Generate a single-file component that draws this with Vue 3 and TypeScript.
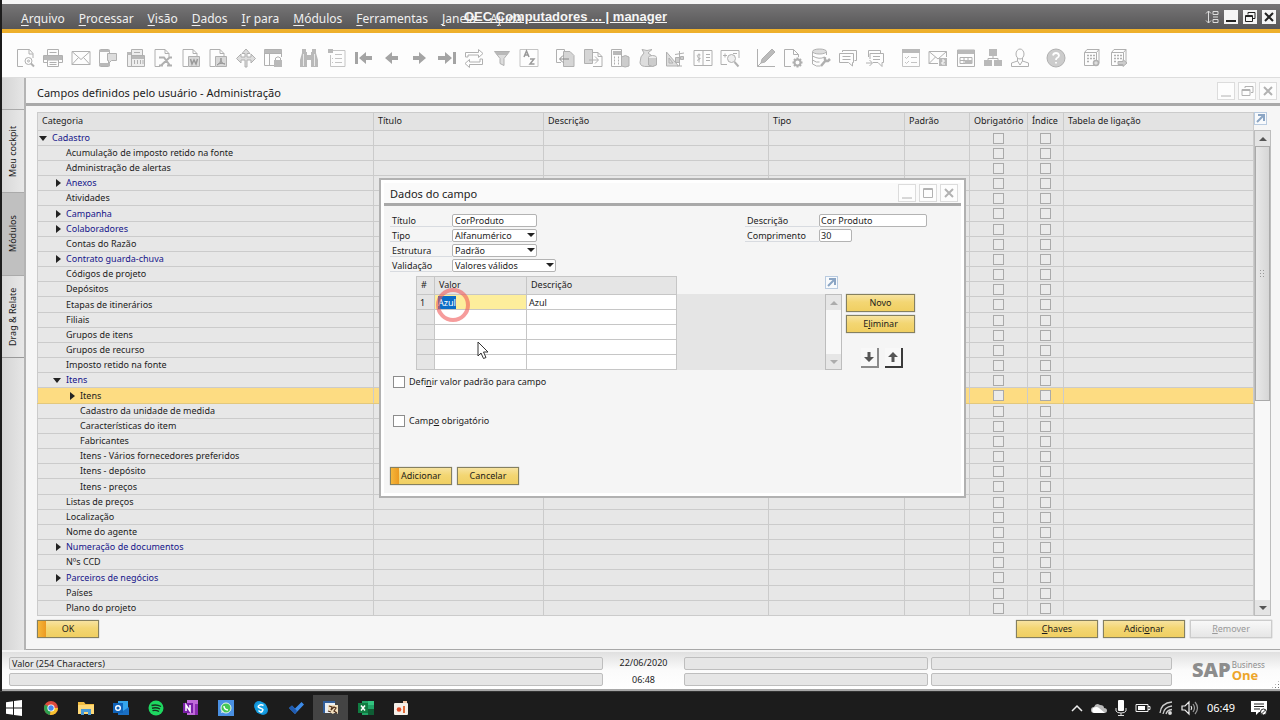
<script setup lang="ts">
import { onMounted, ref } from 'vue'

interface Row {
  label: string
  level: number
  state?: 'open' | 'closed'
  selected?: boolean
}

interface Icon {
  name: string
  art: string
}

const menus: [string, string][] = [
  ['A', 'rquivo'], ['P', 'rocessar'], ['V', 'isão'], ['D', 'ados'], ['I', 'r para'],
  ['M', 'ódulos'], ['F', 'erramentas'], ['J', 'anela'],
]

const G = 'fill="#b9b9b9" stroke="none"'
const sheet = '<path d="M2 18.5V1.500h10l4 4V9M12 1.500v4h4M2 18.500h5"/>'

const toolGroups: Icon[][] = [
  [
    { name: 'Visualizar', art: '<path d="M7 18.5H1.5v-17h12l3.500 4V10M13 1.500v4.500h4"/><circle cx="12.500" cy="13" r="3.500"/><circle cx="12.500" cy="13" r="1"/><path d="M15 15.500l3 3" stroke-width="2"/>' },
    { name: 'Imprimir', art: '<path d="M4.500 7V1.500h11V7M4.500 14.500h-4v-7h19v7h-4M4.500 12v6.500h11V12z"/><path d="M1 8h18v4H1z" ' + G + '/><path d="M6.500 4.500h7M6.500 14.500h7M6.500 16.500h7"/>' },
    { name: 'E-mail', art: '<path d="M1 3.500h18v13H1zM1 3.500l9 8 9-8M1 16.500l6.500-7M19 16.500l-6.500-7"/>' },
    { name: 'SMS', art: '<rect x="1.500" y="1.500" width="10" height="17" rx="1"/><path d="M1 2h11v2H1zM1 15h11v3H1z" ' + G + '/><path d="M9.500 5.500h9v7h-5l-3 3v-3h-1z" fill="#ddd"/>' },
    { name: 'Fax', art: '<path d="M5.500 7V1.500h11V7M1.500 4.500h4v14h-4zM5.500 7.500h13v11h-13z" fill="#eee"/><path d="M1 4h4v3H1zM6 8h12v3H6z" ' + G + '/><path d="M8.500 12v4M11.500 12v4M14.500 12v4M17 12v4M8 4.500h6"/>' },
    { name: 'Excel', art: sheet + '<path d="M6 9.500h5l6 8M8 17.500L16.500 9.500H19M6 17.500h4M14 17.500h5" stroke-width="2"/>' },
    { name: 'Word', art: sheet + '<path d="M7.500 8.500h11v10h-11z" fill="#d8d8d8"/><path d="M9.500 11l1.500 5 2-4 2 4 1.500-5" stroke="#999" stroke-width="1.500"/>' },
    { name: 'PDF', art: sheet + '<path d="M7.500 8.500h11v10h-11z" fill="#d8d8d8"/><path d="M13 10c0 4-2 6-4 7 2-2 6-2 8-1-3 0-4-3-4-6z" fill="#aaa" stroke="#999"/>' },
    { name: 'Iniciar aplicativo', art: '<path d="M10 1l4 4.500h-3V9h4V6l4.500 4.500L15 15v-3h-4v7H9v-7H5v3L.5 10.500 5 6v3h4V5.500H6z" fill="#ddd"/>' },
    { name: 'Bloquear tela', art: '<path d="M11 17.500H1.500v-16h17V9M1.500 5.500h17M6.500 5.500v12"/><path d="M1.500 2h17v3h-17zM11 12h8v7h-8z" ' + G + '/><path d="M12.500 12v-2q2.500-2.500 5 0v2"/>' },
  ],
  [
    { name: 'Procurar', art: '<path d="M3 1h4v3h1v3h4V4h1V1h4v4l2 7v7h-7v-7H8v7H1v-7l2-7z" ' + G + '/><path d="M4.500 6v12M15.500 6v12" stroke="#e8e8e8"/>' },
    { name: 'Adicionar registro', art: '<path d="M5 2.500h13v16H3.500V7M8 6.500h7M8 10.500h7M8 14.500h7M5 10.500h1M5 14.500h1" stroke="#c4c4c4"/><path d="M1 1h5v4H1z" ' + G + '/>' },
    { name: 'Primeiro registro', art: '<path d="M1 4h3v12H1zM18 8v4h-6v4l-7-6 7-6v4z" fill="#a4a4a4" stroke="none"/>' },
    { name: 'Registro anterior', art: '<path d="M16 8v4h-6v4L3 10l7-6v4z" fill="#a4a4a4" stroke="none"/>' },
    { name: 'Próximo registro', art: '<path d="M4 8v4h6v4l7-6-7-6v4z" fill="#a4a4a4" stroke="none"/>' },
    { name: 'Último registro', art: '<path d="M1 8v4h7v4l7-6-7-6v4zM16 4h3v12h-3z" fill="#a4a4a4" stroke="none"/>' },
    { name: 'Atualizar', art: '<path d="M1.500 9V4.500h13V1.500L19 5.500l-4.500 4V7H4v2zM18.500 11v5.500h-13v3L1 15.500l4.500-4V14H16v-3z" fill="#fff"/>' },
    { name: 'Filtro', art: '<path d="M2.500 3.500h15l-5.500 7v7l-4-2v-5z" fill="#ddd"/><path d="M3 4h14l-2 3H5z" ' + G + '/>' },
    { name: 'Classificar', art: '<path d="M1 1.500h18v17H1z" stroke="#c4c4c4"/><path d="M5 9l2.500-6L10 9M6 7h3M11 11h4l-4 5h4.500" stroke-width="1.500" stroke="#999"/>' },
  ],
  [
    { name: 'Documento base', art: '<path d="M6 14.500H1.500v-13h8v3"/><path d="M8.500 3.500h6.500l4 4v11H8.500z" fill="#d5d5d5"/><path d="M14 11H5m3-3.500L4.500 11 8 14.500" stroke="#888"/>' },
    { name: 'Documento de destino', art: '<path d="M1.500 1.500h8v14h-8z" fill="#d5d5d5"/><path d="M10 4.500h5l4 4v10h-9M15 4.500v4h4M6 12h9m-3-3.500l3.500 3.500-3.500 3.500"/>' },
    { name: 'Lucro bruto', art: '<path d="M1.500 1.500h10v17h-10z"/><path d="M4 9.500h1M8 9.500h1M4 12.500h1M8 12.500h1M4 15.500h1M8 15.500h1" stroke-width="2"/><path d="M3 3h8v4H3z" ' + G + '/><path d="M11.500 9q4-3 7.500 0v9q-4 2-7.500 0z" fill="#ccc"/>' },
    { name: 'Meios de pagamento', art: '<path d="M6 5L4 1.500q5 2 10 0L10 5q8 5 8 10 0 4-8 3.500-8 .5-8-4Q2 8 6 5z" fill="#ddd"/><ellipse cx="14.500" cy="9.500" rx="4" ry="2" fill="#eee"/><path d="M10.500 10v7q4 3 8 0v-7" fill="#ccc"/>' },
    { name: 'Volume e peso', art: '<path d="M1.500 4v14h12zM4 10v5h4z" fill="#ddd"/><path d="M10 6.500l9-1.500M10.500 9.500h4v5h-4zM15.500 8.500h3v3h-3z" fill="#ccc"/><path d="M14.500 3v15M12 18h5"/>' },
    { name: 'Diário de transações', art: '<path d="M1 2.500h18v15H1zM10 2.500v15M13 6.500h4M13 9.500h4M13 12.500h4"/><path d="M7.500 7q-4-1-3 1.500t2.500 2-3 2M6 5.500v9"/>' },
    { name: 'Visualizar diário', art: '<path d="M7 16.500H1v-14h18V10M3 7.500h4M5 5.500v4M13 5.500h4"/><circle cx="11.500" cy="10.500" r="4" fill="#eee"/><path d="M14.500 14l4 4.500" stroke-width="2"/>' },
  ],
  [
    { name: 'Designer de layout', art: '<path d="M1.500 1v17.500H19M1.500 18.500L7 13" /><path d="M6 11L16 1l3 3L9 14l-4 1z" fill="#bbb"/>' },
    { name: 'Configurações de formulário', art: '<path d="M8 18.500H1.500v-17h9l5 5V9M10.500 1.500v5h5"/><circle cx="14.500" cy="14.500" r="3" stroke-width="2"/><path d="M14.500 9.500v2M14.500 17.500v2M9.500 14.500h2M17.500 14.500h2M11 11l1.500 1.500M16.500 16.500L18 18M18 11l-1.500 1.500M12.500 16.500L11 18" stroke-width="2"/>' },
    { name: 'Gerenciador de consultas', art: '<ellipse cx="8.500" cy="3.500" rx="7" ry="2.500" fill="#ddd"/><path d="M1.500 4v12q4 3 8 2M15.500 4v3M1.500 8q7 4 12 1M1.500 12q4 3 7 2"/><path d="M10 18l5-6m-1-3q-1 4 3 4l2-2" stroke-width="2.500"/>' },
    { name: 'Mensagens', art: '<path d="M4.500 4V2.500h14v10h-2M1.500 5.500h14v9h-1v3.500l-4-3.500h-9zM4.500 8.500h8M4.500 11.500h8"/>' },
    { name: 'Nova mensagem', art: '<path d="M3.500 9V2.500h12v3M5 11V5.500h13.500v9H17v4l-4-4H8M8 8.500h7M8 11.500h7M1 15h6m-2.500-3L7.500 15l-3 3"/>' },
  ],
  [
    { name: 'Atividades', art: '<path d="M1.500 2.500h17v16h-17zM10 9.500h6M10 14.500h6M4 9l1.500 1.500L8 8M4 14l1.500 1.500L8 13" stroke="#c4c4c4"/><path d="M1 1h18v4H1z" ' + G + '/>' },
    { name: 'Alertas', art: '<path d="M10 15.500H1v-12h17.500V9M1 3.500l9 7.500 8.500-7.500M1 15.500L7.500 9"/><path d="M11 10h8v8h-8z" ' + G + '/><path d="M14 12h2v2h-2v2h3" stroke="#fff"/>' },
    { name: 'Calendário', art: '<path d="M1.500 2h17v16.500h-17zM4 9.500h12v6H4zM8 9.500v6M12 9.500v6M4 12.500h12"/><path d="M1.500 2h17v4h-17zM9 12h7v4H9z" ' + G + '/>' },
    { name: 'Organização', art: '<path d="M6 1h8v7H6zM1 12h8v6H1zM11 12h8v6h-8z" ' + G + '/><path d="M10 8v2.500M5 12v-1.500h10V12"/>' },
    { name: 'Funcionário', art: '<ellipse cx="10" cy="6" rx="4" ry="5"/><path d="M7.500 10v3L1.500 15v3.500h17V15l-6-2v-3M7.500 13l2.500 4 2.500-4"/>' },
  ],
  [
    { name: 'Ajuda', art: '<circle cx="10" cy="10" r="9" fill="#ccc" stroke="#b0b0b0"/><path d="M7 7.500q.5-2.500 3-2.500t3 2.500q0 1.500-2 2.500-1 .5-1 2M10 14v1.500" stroke="#fff" stroke-width="1.800"/>' },
  ],
  [
    { name: 'Configurar painel', art: '<path d="M5 1.500h12v14M2.500 4.500L5 1.500M2.500 4.500h12v13h-12zM14.500 4.500l2.500-3"/><path d="M5 7.500h2m1 0h2m1 0h2M5 10.500h2m1 0h2m1 0h2M5 13.500h2" stroke-width="1.500"/><circle cx="14" cy="15" r="2.500" fill="#ddd" stroke-width="1.500"/>' },
    { name: 'Abrir painel', art: '<path d="M5 1.500h12v14M2.500 4.500L5 1.500M2.500 4.500h12v13h-12zM14.500 4.500l2.500-3"/><path d="M5 7.500h2m1 0h2m1 0h2M5 10.500h2m1 0h2m1 0h2M5 13.500h2" stroke-width="1.500"/><path d="M9 13.500h5v-2l4 3.500-4 3.500v-2H9z" fill="#ccc"/>' },
  ],
]

const sideTabs = [
  { label: 'Meu cockpit', active: false },
  { label: 'Módulos', active: true },
  { label: 'Drag & Relate', active: false },
]

const rows: Row[] = [
  { label: 'Cadastro', level: 0, state: 'open' },
  { label: 'Acumulação de imposto retido na fonte', level: 1 },
  { label: 'Administração de alertas', level: 1 },
  { label: 'Anexos', level: 1, state: 'closed' },
  { label: 'Atividades', level: 1 },
  { label: 'Campanha', level: 1, state: 'closed' },
  { label: 'Colaboradores', level: 1, state: 'closed' },
  { label: 'Contas do Razão', level: 1 },
  { label: 'Contrato guarda-chuva', level: 1, state: 'closed' },
  { label: 'Códigos de projeto', level: 1 },
  { label: 'Depósitos', level: 1 },
  { label: 'Etapas de itinerários', level: 1 },
  { label: 'Filiais', level: 1 },
  { label: 'Grupos de itens', level: 1 },
  { label: 'Grupos de recurso', level: 1 },
  { label: 'Imposto retido na fonte', level: 1 },
  { label: 'Itens', level: 1, state: 'open' },
  { label: 'Itens', level: 2, state: 'closed', selected: true },
  { label: 'Cadastro da unidade de medida', level: 2 },
  { label: 'Características do item', level: 2 },
  { label: 'Fabricantes', level: 2 },
  { label: 'Itens - Vários fornecedores preferidos', level: 2 },
  { label: 'Itens - depósito', level: 2 },
  { label: 'Itens - preços', level: 2 },
  { label: 'Listas de preços', level: 1 },
  { label: 'Localização', level: 1 },
  { label: 'Nome do agente', level: 1 },
  { label: 'Numeração de documentos', level: 1, state: 'closed' },
  { label: 'Nºs CCD', level: 1 },
  { label: 'Parceiros de negócios', level: 1, state: 'closed' },
  { label: 'Países', level: 1 },
  { label: 'Plano do projeto', level: 1 },
]

const apps: Icon[] = [
  { name: 'Chrome', art: '<circle cx="8" cy="8" r="7" fill="#dd4b3e"/><path d="M8 8L2 4.500A7 7 0 0 0 7 15z" fill="#2da14f"/><path d="M8 8h7a7 7 0 0 1-8 7z" fill="#f6c22f"/><circle cx="8" cy="8" r="3.600" fill="#fff"/><circle cx="8" cy="8" r="2.700" fill="#4587ed"/>' },
  { name: 'Explorador de arquivos', art: '<path d="M0 2h6l1.500 2H16v10H0z" fill="#f2bd42"/><path d="M0 5h16v9H0z" fill="#ffd977"/><path d="M3 9h10v6h-3v-3H6v3H3z" fill="#4a9bd8"/>' },
  { name: 'Outlook', art: '<path d="M5 1h10v13H5z" fill="#35a5ea"/><path d="M5 8l5 3 6-4v8H5z" fill="#1a6fc4"/><rect y="3" width="10" height="10" fill="#0f62b8"/><circle cx="5" cy="8" r="2.300" fill="none" stroke="#fff" stroke-width="1.400"/>' },
  { name: 'Spotify', art: '<circle cx="8" cy="8" r="7.500" fill="#1ed760"/><path d="M3.500 5.500q5-1.500 9.500 1M4 8.200q4.500-1.200 8 .8M4.500 10.700q3.500-1 6.500.8" fill="none" stroke="#16301f" stroke-width="1.400"/>' },
  { name: 'OneNote', art: '<path d="M4 0h11v15H4z" fill="#c06ad8"/><path d="M12 4h3v11h-3z" fill="#8a2bb0"/><rect y="3" width="10" height="10" fill="#7a1ea8"/><path d="M3 11V5l4 6V5" fill="none" stroke="#fff" stroke-width="1.500"/>' },
  { name: 'WhatsApp', art: '<path d="M0 0h16v16H0z" fill="#4a90e2"/><circle cx="8" cy="8" r="5" fill="#45c655" stroke="#e6f4e8"/><path d="M6 6q0 3.500 4 4" fill="none" stroke="#fff" stroke-width="1.500"/><path d="M3 13l1-3 2 2z" fill="#e6f4e8"/>' },
  { name: 'Skype', art: '<circle cx="6" cy="6" r="5" fill="#1291d8"/><circle cx="10" cy="10" r="5" fill="#1291d8"/><circle cx="8" cy="8" r="6" fill="#15a0e2"/><path d="M10.500 5.500Q8 4 6 5.500t1 2.500 3 1.500-1 2T5.500 10.500" fill="none" stroke="#fff" stroke-width="1.500"/>' },
  { name: 'To Do', art: '<path d="M1 8l3-2.500 3 3L13.500 2 16 4.500 7 14z" fill="#3d8be8"/><path d="M1 8l3-2.500 5 5.500-2 3z" fill="#205bb0"/>' },
  { name: 'SAP Business One', art: '<path d="M0 1h12v12H0z" fill="#e8eef4"/><path d="M0 1h12v2H2v10H0z" fill="#315f9c"/><path d="M5 5h10v9l-3-2-2 2-5-3z" fill="#f2dfbd"/><path d="M6 6l3 1-1 3 3-3 2 1-2 3 3 2M5 11l3 1" fill="none" stroke="#51321d" stroke-width="1.200"/>' },
  { name: 'Excel', art: '<path d="M4 1h12v14H4z" fill="#21a366"/><path d="M10 1h6v4h-6z" fill="#33c481"/><path d="M10 9h6v6h-6z" fill="#0f5e35"/><rect y="3" width="10" height="10" fill="#107c41"/><path d="M3 5.500l4 5M7 5.500l-4 5" stroke="#fff" stroke-width="1.500"/>' },
  { name: 'Gravador', art: '<rect x="1" y="3" width="14" height="12" rx="1" fill="#f4efe8"/><circle cx="6" cy="9.500" r="2.300" fill="#df4c2a"/><path d="M10 6h2v7h-2z" fill="#e36b37"/><path d="M10 1h4v2h-4z" fill="#f1c8a8"/>' },
]

const fieldTitle = ref('CorProduto')
const fieldDescription = ref('Cor Produto')
const fieldLength = ref('30')
const fieldValue = ref('Azul')
const valueInput = ref<HTMLInputElement | null>(null)

onMounted(() => {
  valueInput.value?.focus()
  valueInput.value?.select()
})
</script>

<template>
  <div class="desktop">
    <div class="app">
      <header class="menubar">
        <nav class="menus" aria-label="Menu principal">
          <a v-for="m in menus" :key="m[1]" href="#"><u>{{ m[0] }}</u>{{ m[1] }}</a>
          <a href="#">A<u>j</u>uda</a>
        </nav>
        <a class="company" href="#">OEC Computadores ... | manager</a>
        <div class="app-controls">
          <svg class="resize" width="14" height="14" viewBox="0 0 14 14" fill="none" stroke="#ddd"><path d="M3.500 1v12M1 3.500L3.500 1 6 3.500M1 10.500L3.500 13 6 10.500M8 1.500h5v3H8zM8 9.500h5v3H8zM8 7h5" /></svg>
          <button aria-label="Minimizar"><svg width="14" height="14" viewBox="0 0 14 14"><path d="M2 11h10" stroke="#222" stroke-width="2" /></svg></button>
          <button aria-label="Restaurar"><svg width="14" height="14" viewBox="0 0 14 14" fill="none" stroke="#222"><path d="M5 4.500V2.500h7v6h-2M2.500 5.500h7v6h-7zM2.500 6.500h7" /></svg></button>
          <button aria-label="Fechar"><svg width="14" height="14" viewBox="0 0 14 14"><path d="M3 3l8 8M11 3l-8 8" stroke="#222" stroke-width="2" /></svg></button>
        </div>
      </header>

      <div class="toolbar">
        <div v-for="(g, i) in toolGroups" :key="i" class="tool-group" :class="'tools-' + g.length">
          <button v-for="t in g" :key="t.name" :aria-label="t.name">
            <svg width="20" height="20" viewBox="0 0 20 20" fill="none" stroke="#b0b0b0" v-html="t.art" />
          </button>
        </div>
      </div>

      <div class="workspace">
        <aside class="rail">
          <button v-for="t in sideTabs" :key="t.label" :class="{ active: t.active }">{{ t.label }}</button>
        </aside>

        <main class="window">
          <div class="titlebar">
            <h1>Campos definidos pelo usuário - Administração</h1>
            <div class="win-controls">
              <button aria-label="Minimizar janela"><svg width="16" height="16" viewBox="0 0 16 16"><path d="M3 13h10" /></svg></button>
              <button aria-label="Restaurar janela"><svg width="16" height="16" viewBox="0 0 16 16"><path d="M6 5V3.500h8v6h-2M3 6.500h8v6H3zM3 7.500h8" /></svg></button>
              <button aria-label="Fechar janela"><svg width="16" height="16" viewBox="0 0 16 16"><path d="M4 4l8 8M12 4l-8 8" stroke-width="2" /></svg></button>
            </div>
          </div>

          <div class="list">
            <div class="tree-wrap">
              <table class="tree">
                <colgroup>
                  <col class="c-cat"><col class="c-title"><col class="c-desc"><col class="c-type"><col class="c-def"><col class="c-req"><col class="c-idx"><col>
                </colgroup>
                <thead>
                  <tr>
                    <th>Categoria</th><th>Título</th><th>Descrição</th><th>Tipo</th><th>Padrão</th><th>Obrigatório</th><th>Índice</th><th>Tabela de ligação</th>
                  </tr>
                </thead>
                <tbody>
                  <tr v-for="(r, i) in rows" :key="i" :class="{ selected: r.selected }">
                    <td :class="['level-' + r.level, { group: r.state && !r.selected }]">
                      <span class="twist" :class="r.state" />{{ r.label }}
                    </td>
                    <td /><td /><td /><td />
                    <td class="check"><input type="checkbox" :aria-label="'Obrigatório: ' + r.label" disabled></td>
                    <td class="check"><input type="checkbox" :aria-label="'Índice: ' + r.label" disabled></td>
                    <td />
                  </tr>
                </tbody>
              </table>
            </div>
            <div class="list-side">
              <button class="expand" aria-label="Expandir tabela"><svg width="13" height="13" viewBox="0 0 13 13"><path d="M3 10l6-6M4 3h6v6" /></svg></button>
              <div class="scroll">
                <button aria-label="Rolar para cima"><span class="tri up" /></button>
                <div class="thumb"><span class="grip" /></div>
                <div class="track" />
                <button aria-label="Rolar para baixo"><span class="tri down" /></button>
              </div>
            </div>
          </div>

          <div class="actions">
            <button class="btn default ok">OK</button>
            <button class="btn wide"><u>C</u>haves</button>
            <button class="btn wide">Adici<u>o</u>nar</button>
            <button class="btn wide" disabled><u>R</u>emover</button>
          </div>
        </main>
      </div>

      <footer class="status">
        <div class="fields message"><span>Valor (254 Characters)</span><span /></div>
        <div class="clock"><span>22/06/2020</span><span>06:48</span></div>
        <div class="fields mid"><span /><span /></div>
        <div class="fields end"><span /><span /></div>
        <div class="logo">
          <strong>SAP</strong>
          <div class="product"><span>Business</span><b>One</b></div>
        </div>
        <span class="corner" />
      </footer>
    </div>

    <section class="dialog" role="dialog" aria-labelledby="dialog-title">
      <div class="dialog-title">
        <h2 id="dialog-title">Dados do campo</h2>
        <div class="win-controls">
          <button aria-label="Minimizar diálogo"><svg width="16" height="16" viewBox="0 0 16 16"><path d="M3 13h10" /></svg></button>
          <button aria-label="Maximizar diálogo"><svg width="16" height="16" viewBox="0 0 16 16"><path d="M3.500 3.500h9v9h-9zM3.500 4.500h9" /></svg></button>
          <button aria-label="Fechar diálogo"><svg width="16" height="16" viewBox="0 0 16 16"><path d="M4 4l8 8M12 4l-8 8" stroke-width="2" /></svg></button>
        </div>
      </div>
      <div class="dialog-body">
        <div class="form">
          <div class="form-left">
            <label for="f-title">Título</label>
            <input id="f-title" v-model="fieldTitle" class="field">
            <label for="f-type">Tipo</label>
            <span class="combo"><select id="f-type" class="field"><option>Alfanumérico</option></select><i /></span>
            <label for="f-struct">Estrutura</label>
            <span class="combo"><select id="f-struct" class="field"><option>Padrão</option></select><i /></span>
            <label for="f-valid">Validação</label>
            <span class="combo long"><select id="f-valid" class="field"><option>Valores válidos</option></select><i /></span>
          </div>
          <div class="form-right">
            <label for="f-desc">Descrição</label>
            <input id="f-desc" v-model="fieldDescription" class="field">
            <label for="f-len">Comprimento</label>
            <input id="f-len" v-model="fieldLength" class="field short">
          </div>
        </div>

        <div class="values">
          <div class="values-grid">
            <table>
              <colgroup><col class="v-num"><col class="v-val"><col></colgroup>
              <thead><tr><th>#</th><th>Valor</th><th>Descrição</th></tr></thead>
              <tbody>
                <tr>
                  <td>1</td>
                  <td class="editing"><input ref="valueInput" v-model="fieldValue" aria-label="Valor" size="4"></td>
                  <td>Azul</td>
                </tr>
                <tr v-for="n in 4" :key="n"><td /><td /><td /></tr>
              </tbody>
            </table>
            <div class="filler" />
            <div class="values-side">
              <button class="expand" aria-label="Expandir valores"><svg width="13" height="13" viewBox="0 0 13 13"><path d="M3 10l6-6M4 3h6v6" /></svg></button>
              <div class="scroll idle">
                <button aria-label="Valores acima"><span class="tri up" /></button>
                <div class="track" />
                <button aria-label="Valores abaixo"><span class="tri down" /></button>
              </div>
            </div>
          </div>
          <div class="values-actions">
            <button class="btn">Novo</button>
            <button class="btn">E<u>l</u>iminar</button>
            <div class="movers">
              <button aria-label="Mover para baixo"><svg width="14" height="14" viewBox="0 0 14 14"><path d="M5.500 2h3v5H12l-5 5-5-5h3.500z" /></svg></button>
              <button class="dark" aria-label="Mover para cima"><svg width="14" height="14" viewBox="0 0 14 14"><path d="M5.500 12h3V7H12L7 2 2 7h3.500z" /></svg></button>
            </div>
          </div>
        </div>

        <label class="tick"><input type="checkbox"><span>Defi<u>n</u>ir valor padrão para campo</span></label>
        <label class="tick second"><input type="checkbox"><span>Camp<u>o</u> obrigatório</span></label>

        <div class="dialog-actions">
          <button class="btn default">Adicionar</button>
          <button class="btn">Cancelar</button>
        </div>
      </div>
      <span class="click-ring" />
      <svg class="pointer" width="12" height="19" viewBox="0 0 12 19"><path d="M1 1v14l3-3 2.500 5.500 2.500-1L6.500 11H11z" fill="#fff" stroke="#333" /></svg>
    </section>

    <div class="taskbar">
      <button class="start" aria-label="Iniciar"><svg width="16" height="16" viewBox="0 0 16 16" fill="#fff"><path d="M0 2.300l7-1v6.200H0zM8 1.100L16 0v7.500H8zM0 8.500h7v6.200l-7-1zM8 8.500h8V16l-8-1.100z" /></svg></button>
      <button v-for="a in apps" :key="a.name" class="task" :class="{ current: a.name === 'SAP Business One' }" :aria-label="a.name">
        <svg width="16" height="16" viewBox="0 0 16 16" v-html="a.art" />
      </button>
      <div class="tray">
        <svg width="12" height="16" viewBox="0 0 12 16" fill="none" stroke="#eee" stroke-width="1.500"><path d="M1 11l5-5 5 5" /></svg>
        <svg width="16" height="16" viewBox="0 0 16 16"><path d="M3 13a3 3 0 0 1 0-6Q5 2 9 5q4 0 4 3 3 0 3 2.500T13 13z" fill="#bbb" /><path d="M2 8q4-2 6 0l6 5H3q-3-1-1-5z" fill="#fff" /></svg>
        <svg width="12" height="16" viewBox="0 0 12 16"><rect x="3" width="6" height="11" rx="1" fill="#fff" /><path d="M1 8v3q1 2 5 2t5-2V8M6 13v2M3 15.500h6" fill="none" stroke="#ddd" /></svg>
        <svg width="16" height="16" viewBox="0 0 16 16"><path d="M1 4.500h12v7H1zM13 6.500h2v3h-2" fill="none" stroke="#eee" /><path d="M3 6h7v4H3z" fill="#fff" /></svg>
        <svg width="14" height="16" viewBox="0 0 14 16" fill="none" stroke="#ccc" stroke-width="1.300"><path d="M1 13Q2 3 13 2M4 14q1-7 9-8M7 14q1-4 6-4.500" /><circle cx="11" cy="13" r="1.300" fill="#fff" /></svg>
        <svg width="18" height="16" viewBox="0 0 18 16" fill="none" stroke="#eee" stroke-width="1.200"><path d="M1 6h3l4-4v12l-4-4H1zM10 6q1.500 2 0 4" /><path d="M12 4q3 4 0 8M14 2q5 6 0 12" stroke="#999" /></svg>
        <span class="time">06:49</span>
        <svg class="notes" width="16" height="16" viewBox="0 0 16 16"><path d="M0 1h16v11H8l-3 3v-3H0z" fill="#fff" /><path d="M3 4h10M3 6.500h10M3 9h6" stroke="#222" /><circle cx="12.500" cy="12" r="3" fill="#fff" stroke="#222" /><path d="M10.500 14l4-4" stroke="#222" /></svg>
      </div>
    </div>
  </div>
</template>

<style>
body { background: #1c1c1c; }
</style>

<style scoped>
.desktop {
  --ui: "Noto Sans", "Open Sans", sans-serif;
  --gold: linear-gradient(#f7e3a0, #f3d673 45%, #f0cf62);
  position: relative;
  display: flex;
  flex-direction: column;
  min-height: 100vh;
  font: 9px/14px var(--ui);
  color: #1c1c1c;
  background: #1c1c1c;
}
* { box-sizing: border-box; }
button, input, select { margin: 0; padding: 0; border: 0; font: inherit; color: inherit; background: none; border-radius: 0; outline: 0; }
a { color: inherit; text-decoration: none; }
h1, h2 { margin: 0; font-weight: 400; }
svg { display: block; flex: none; }

.app { flex: 1; display: flex; flex-direction: column; margin-left: 2px; padding-top: 4px; background: #f6f6f6; }

.menubar { position: relative; display: flex; align-items: center; height: 29px; padding: 1px 4px 0 19px; background: linear-gradient(#767576, #575657); border-bottom: 4px solid #eeb02c; color: #f0f0f0; }
.menus { display: flex; gap: 14px; padding-top: 4px; font: 12px/20px var(--ui); white-space: nowrap; }
.menus u { text-underline-offset: 2px; }
.company { position: absolute; left: 462px; top: 4px; font: bold 13px/18px "Liberation Sans", sans-serif; text-decoration: underline; color: #f6f6f6; white-space: nowrap; }
.app-controls { display: flex; align-items: center; gap: 5px; margin-left: auto; }
.app-controls button { width: 14px; height: 14px; background: #f5f5f5; }

.toolbar { display: flex; align-items: center; gap: 16px; height: 45px; padding: 5px 14px 0; background: #fdfdfd; border-bottom: 1px solid #ddd; }
.tool-group { display: flex; justify-content: space-between; }
.tool-group button { width: 20px; height: 20px; }
.tools-10 { width: 267px; }
.tools-9 { width: 240px; }
.tools-7 { width: 185px; }
.tools-5 { width: 129px; }
.tools-2 { width: 47px; }

.workspace { flex: 1; display: flex; }
.rail { width: 24px; padding-top: 31px; background: linear-gradient(90deg, #d4d4d4, #e6e6e6); border-right: 2px solid #b4b4b4; }
.rail button { display: block; width: 22px; height: 83px; writing-mode: vertical-rl; transform: rotate(180deg); text-align: center; border-bottom: 1px solid #aaa; background: linear-gradient(90deg, #e8e8e8, #d8d8d8); }
.rail button:last-child { border-top: 1px solid #999; }
.rail button.active { background: #c0c0c0; }

.window { flex: 1; min-width: 0; display: flex; flex-direction: column; background: #f6f6f6; border-bottom: 1px solid #a8a8a8; }
.titlebar { display: flex; align-items: center; height: 28px; padding: 0 3px 0 11px; border-bottom: 3px solid #a9a9a9; }
h1, h2 { font: 11px/18px var(--ui); color: #1c1c1c; }
.titlebar h1 { padding-top: 4px; }
.win-controls { display: flex; gap: 3px; margin-left: auto; }
.win-controls button { width: 18px; height: 18px; border: 1px solid #dcdcdc; background: #fdfdfd; }
.win-controls svg { fill: none; stroke: #b2b2b2; }

.list { display: flex; align-items: flex-start; margin: 6px 9px 0 11px; }
.tree-wrap { flex: 1; min-width: 0; }
.tree { width: 100%; table-layout: fixed; border-collapse: collapse; background: #e7e7e7; }
.c-cat { width: 336px; }
.c-title { width: 170px; }
.c-desc { width: 225px; }
.c-type { width: 136px; }
.c-def { width: 65px; }
.c-req { width: 58px; }
.c-idx { width: 36px; }
.tree th, .tree td { padding: 0; border: 1px solid #cbcbcb; white-space: nowrap; line-height: 14px; }
.tree th { height: 18px; padding: 0 0 2px 4px; font-weight: 400; text-align: left; background: #e3e3e3; }
.tree td { height: 15px; }
.tree tr:nth-child(6n) td { height: 16px; }
.tree .selected td { background: #fddc82; border-top-color: #e3c87c; border-bottom-color: #e3c87c; }
.tree .group { color: #15158a; }
.tree .level-1 { padding-left: 14px; }
.tree .level-2 { padding-left: 28px; }
.twist { display: inline-block; width: 10px; height: 8px; margin: 0 1px 0 3px; vertical-align: -1px; }
.twist.open::before, .twist.closed::before { content: ""; display: block; border: solid transparent; }
.twist.open::before { margin-top: 2px; margin-left: -2px; width: 0; border-width: 5px 4px 0; border-top-color: #222; }
.twist.closed::before { margin-left: 1px; width: 0; border-width: 4px 0 4px 5px; border-left-color: #222; }
.check input { display: block; appearance: none; width: 11px; height: 11px; margin: 0 auto; border: 1px solid #aaa; background: #ebebeb; }
.list-side { align-self: stretch; display: flex; flex-direction: column; width: 17px; }
.expand { width: 13px; height: 13px; border: 1px solid #b9cbe0; background: #f8fafc; }
.expand svg { margin: -1px; fill: none; stroke: #8ba5c4; stroke-width: 2; }
.list-side .expand { margin-bottom: 5px; }
.scroll { flex: 1; display: flex; flex-direction: column; width: 17px; border: 1px solid #bdbdbd; background: #f8f8f8; }
.scroll button { display: flex; align-items: center; justify-content: center; height: 15px; background: #e4e4e4; }
.tri { border: solid transparent; border-width: 0 4px; }
.tri.up { border-bottom: 4px solid #555; }
.tri.down { border-top: 4px solid #555; }
.thumb { flex: 254; display: flex; align-items: center; justify-content: center; border: 1px solid #aaa; background: linear-gradient(90deg, #e8e8e8, #d6d6d6); }
.grip { width: 7px; height: 9px; background: radial-gradient(#999 1px, transparent 1px) 0 0 / 3px 3px; }
.track { flex: 200; }

.btn { position: relative; height: 18px; width: 62px; border: 1px solid #85805f; background: var(--gold); line-height: 14px; text-align: center; box-shadow: 0 0 1px #999; }
.btn.default { background: linear-gradient(90deg, #f5b73a, #ec9a22) 0 0 / 8px 100% no-repeat, var(--gold); }
.btn.wide { width: 82px; }
.btn:disabled { border-color: #ccc; color: #999; background: linear-gradient(#f8f8f8, #e6e6e6); }
.actions { display: flex; gap: 5px; padding: 4px 8px 11px 11px; }
.actions .ok { margin-right: auto; }

.status { position: relative; display: flex; align-items: center; height: 41px; padding: 4px 14px 2px 7px; background: linear-gradient(#e0e0e0, #fbfbfb 50%, #fff); border-top: 2px solid #f4f4f4; border-bottom: 2px solid #a8a8a8; }
.fields { display: flex; flex-direction: column; gap: 3px; }
.fields span { height: 13px; padding-left: 2px; border: 1px solid #bebebe; border-radius: 2px; background: #e6e6e6; line-height: 12px; white-space: nowrap; }
.message { flex: 594; }
.clock { width: 81px; display: flex; flex-direction: column; gap: 3px; text-align: center; }
.mid { flex: 244; margin-right: 3px; }
.end { flex: 241; }
.logo { display: flex; align-items: center; gap: 1px; margin-left: 20px; padding-bottom: 3px; width: 74px; color: #8d8d8d; }
.logo strong { font: 800 20px/24px "Open Sans", sans-serif; }
.product { display: flex; flex-direction: column; font: 8px/9px var(--ui); }
.product b { font: bold 13px/12px "Open Sans", sans-serif; color: #eda52a; }
.corner { position: absolute; right: 0; bottom: 0; width: 9px; height: 9px; clip-path: polygon(100% 0, 100% 100%, 0 100%); background: radial-gradient(#777 1px, transparent 1px) 0 0 / 3px 3px; }

.dialog { position: absolute; left: 379px; top: 178px; width: 587px; height: 320px; padding: 3px; border: 2px solid #b1b1b1; background: #fff; }
.dialog-title { display: flex; align-items: center; height: 23px; padding: 0 3px 0 6px; background: #fafafa; border-bottom: 3px solid #a9a9a9; }
.dialog-title h2 { padding-top: 2px; }
.dialog-body { height: calc(100% - 23px); padding: 8px 34px 0 6px; background: #f5f5f5; }
.form { display: flex; justify-content: space-between; }
.form-left, .form-right { display: grid; grid-auto-rows: 13px; row-gap: 2px; align-items: stretch; align-content: start; }
.form-left { grid-template-columns: 62px 104px; }
.form-right { grid-template-columns: 74px 108px; }
.form label { padding-left: 2px; border-bottom: 1px solid #d8dbe0; line-height: 14px; }
.field { display: block; width: 85px; height: 13px; padding: 0 0 0 2px; border: 1px solid #b3b3b3; border-radius: 2px; background: #fff; line-height: 11px; appearance: none; }
.form-right .field { width: 108px; padding-left: 1px; }
.form-right .short { width: 33px; }
.combo { position: relative; width: 85px; }
.combo.long, .combo.long .field { width: 104px; }
.combo i { position: absolute; right: 2px; top: 4px; border: solid transparent; border-width: 4px 4px 0; border-top-color: #222; pointer-events: none; }

.values { display: flex; gap: 4px; margin: 4px 12px 0 0; padding-left: 26px; }
.values-grid { display: flex; flex: 1; }
.values table { width: 261px; table-layout: fixed; border-collapse: collapse; background: #fff; }
.v-num { width: 18px; }
.v-val { width: 92px; }
.values th, .values td { height: 15px; padding: 0 0 0 2px; border: 1px solid #c6c6c6; font-weight: 400; text-align: left; line-height: 13px; }
.values th { height: 18px; padding: 0 0 2px 4px; background: #e5e5e5; }
.values td:first-child { background: #e5e5e5; padding-left: 3px; }
.values .editing { background: #fdee9c; }
.editing input { display: block; width: 100%; height: 14px; padding: 0 0 0 1px; line-height: 12px; }
.editing input::selection { color: #fff; background: #0a6cc6; }
.filler { flex: 1; margin-top: 18px; background: #e5e5e5; }
.values-side { display: flex; flex-direction: column; gap: 5px; }
.idle button { background: #e6e6e6; }
.idle .tri { opacity: 0.4; }
.values-actions { display: flex; flex-direction: column; gap: 3px; padding-top: 18px; }
.values-actions .btn { width: 69px; }
.movers { display: flex; gap: 6px; margin-top: 12px; padding-left: 15px; }
.movers button { width: 18px; height: 20px; padding-left: 1px; border-right: 2px solid #8b8b8b; border-bottom: 2px solid #8b8b8b; background: #f8f8f8; }
.movers .dark { border-color: #3a3a3a; }
.movers path { fill: #555; }

.tick { display: flex; align-items: center; width: max-content; gap: 4px; margin: 5px 0 0 3px; height: 14px; }
.tick input { appearance: none; width: 12px; height: 12px; border: 1px solid #8c8c8c; background: #fff; }
.tick.second { margin-top: 25px; }
.dialog-actions { display: flex; gap: 5px; margin-top: 39px; }
.click-ring { position: absolute; left: 55px; top: 108px; width: 34px; height: 34px; border: 4px solid rgba(240, 90, 90, 0.6); border-radius: 50%; pointer-events: none; }
.pointer { position: absolute; left: 96px; top: 161px; }

.taskbar { display: flex; align-items: stretch; height: 29px; padding: 3px 13px 0 0; background: #1c1c1c; border-top: 1px solid #333; }
.taskbar button { display: flex; align-items: center; justify-content: center; }
.start { width: 28px; margin-right: 5px; }
.task { width: 35px; }
.task.current { background: #444; }
.tray { display: flex; align-items: center; gap: 8px; margin-left: auto; color: #fff; }
.tray .time { font: 11px/16px var(--ui); }
.notes { margin-left: 8px; }
</style>
